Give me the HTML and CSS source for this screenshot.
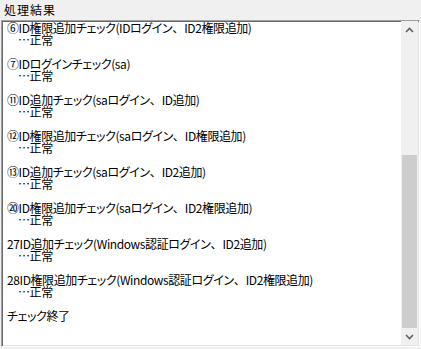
FILE: index.html
```html
<!DOCTYPE html>
<html lang="ja">
<head>
<meta charset="utf-8">
<link rel="stylesheet" href="styles.css">
</head>
<body>
<div class="label">処理結果</div>
<div class="box">
  <div class="log">
    <div class="entry">
      <div class="line">⑥ID権限追加チェック(IDログイン<span class="ten">、</span>ID2権限追加)</div>
      <div class="result">…正常</div>
    </div>
    <div class="entry">
      <div class="line">⑦IDログインチェック(sa)</div>
      <div class="result">…正常</div>
    </div>
    <div class="entry">
      <div class="line">⑪ID追加チェック(saログイン<span class="ten">、</span>ID追加)</div>
      <div class="result">…正常</div>
    </div>
    <div class="entry">
      <div class="line">⑫ID権限追加チェック(saログイン<span class="ten">、</span>ID権限追加)</div>
      <div class="result">…正常</div>
    </div>
    <div class="entry">
      <div class="line">⑬ID追加チェック(saログイン<span class="ten">、</span>ID2追加)</div>
      <div class="result">…正常</div>
    </div>
    <div class="entry">
      <div class="line">⑳ID権限追加チェック(saログイン<span class="ten">、</span>ID2権限追加)</div>
      <div class="result">…正常</div>
    </div>
    <div class="entry">
      <div class="line">27ID追加チェック(Windows認証ログイン<span class="ten">、</span>ID2追加)</div>
      <div class="result">…正常</div>
    </div>
    <div class="entry">
      <div class="line">28ID権限追加チェック(Windows認証ログイン<span class="ten">、</span>ID2権限追加)</div>
      <div class="result">…正常</div>
    </div>
    <div class="entry">
      <div class="line">チェック終了</div>
    </div>
  </div>
  <div class="scrollbar">
    <div class="btn">
      <svg width="9" height="6" viewBox="0 0 9 6"><path d="M1 5 L4.5 1.5 L8 5" fill="none" stroke="#606060" stroke-width="1.6"/></svg>
    </div>
    <div class="track"><div class="thumb"></div></div>
    <div class="btn">
      <svg width="9" height="6" viewBox="0 0 9 6"><path d="M1 1 L4.5 4.5 L8 1" fill="none" stroke="#606060" stroke-width="1.6"/></svg>
    </div>
  </div>
</div>
</body>
</html>
```
FILE: styles.css
```css
html, body {
  margin: 0;
  padding: 0;
  background: #f0f0f0;
  width: 421px;
  height: 349px;
  overflow: hidden;
  font-family: "Noto Sans CJK JP", "Noto Sans", sans-serif;
  font-size: 12px;
  color: #000;
}
.label {
  height: 20px;
  line-height: 20px;
  padding-left: 4px;
  letter-spacing: 1px;
}
.box {
  margin-left: 1px;
  width: 419px;
  height: 327px;
  box-sizing: border-box;
  background: #fff;
  border: 1px solid;
  border-color: #a0a0a0 #ffffff #ffffff #a0a0a0;
  box-shadow: inset 1px 1px 0 #696969, inset -1px -1px 0 #e3e3e3;
  display: flex;
  overflow: hidden;
}
.log {
  flex: 1;
  display: flex;
  flex-direction: column;
  gap: 12px;
  padding: 1px 0 0 5px;
  overflow: hidden;
  font-feature-settings: "palt";
  letter-spacing: -0.4px;
}
.line, .result {
  white-space: nowrap;
  line-height: 12px;
  height: 12px;
}
.result {
  padding-left: 11px;
}
.ten {
  font-feature-settings: normal;
  letter-spacing: 0;
}
.scrollbar {
  width: 17px;
  margin: 0 1px 1px 0;
  background: #f0f0f0;
  display: flex;
  flex-direction: column;
}
.btn {
  height: 17px;
  display: flex;
  align-items: center;
  justify-content: center;
}
.track {
  flex: 1;
  display: flex;
  flex-direction: column;
  justify-content: flex-end;
}
.thumb {
  height: 173px;
  margin: 0 1px;
  background: #cdcdcd;
}
```
